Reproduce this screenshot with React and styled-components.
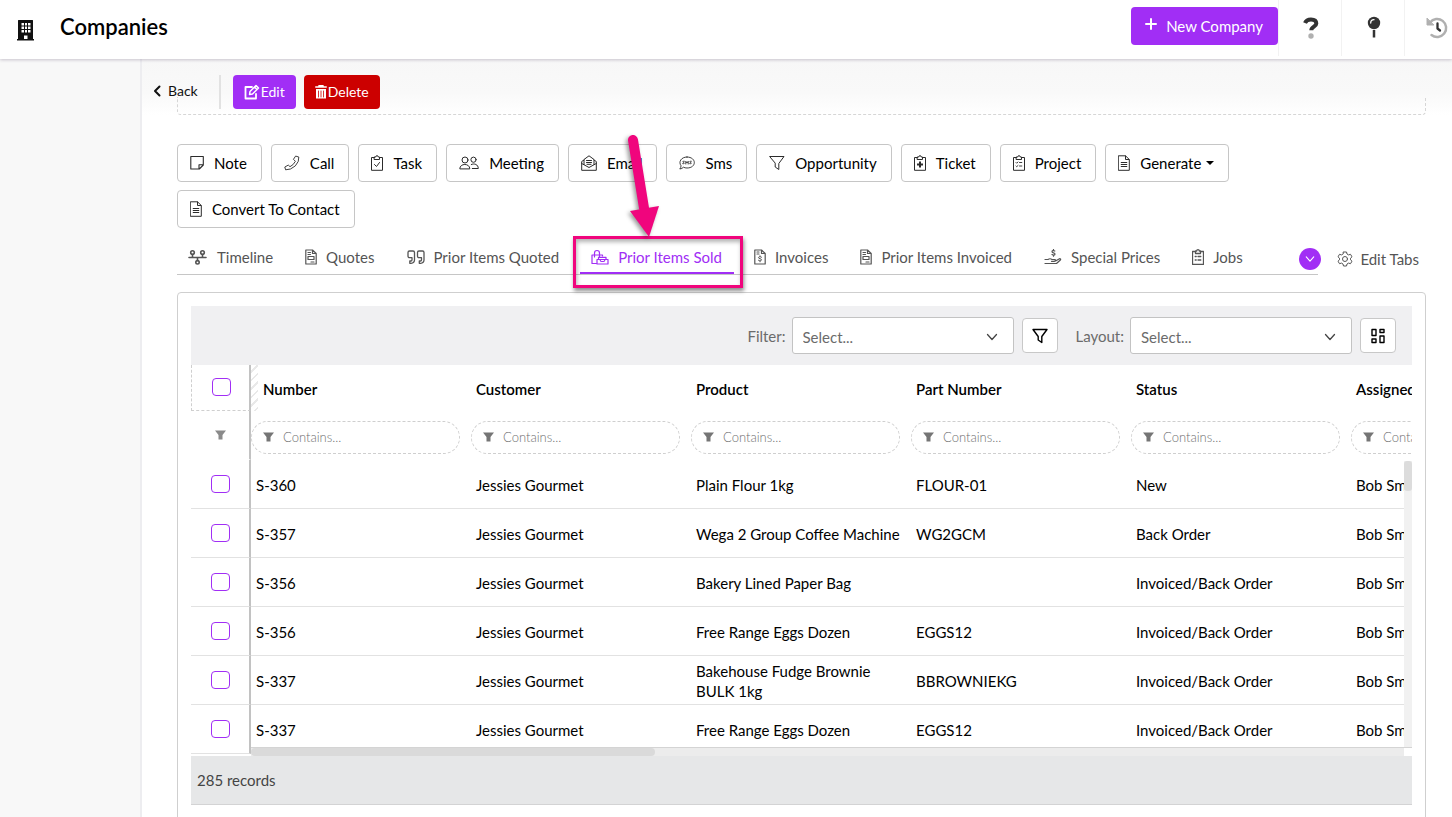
// React
import React from 'react';

// Styled Components
import styled, { createGlobalStyle, css } from 'styled-components';

const GlobalStyle = createGlobalStyle`
  *, *::before, *::after {
    box-sizing: border-box;
  }
  body {
    margin: 0;
    background: #fff;
    color: #000;
    font-family: Lato, "Liberation Sans", sans-serif;
    font-size: 15px;
    line-height: 20px;
  }
  button, input, select {
    font: inherit;
    color: inherit;
  }
`;

const purple = '#a12ef5';
const pink = '#f0057d';

const Shell = styled.div`
  display: flex;
  flex-direction: column;
  height: 100vh;
  overflow: hidden;
`;

// Top bar
const TopBar = styled.header`
  display: flex;
  align-items: center;
  height: 59px;
  flex: none;
  padding-left: 16px;
  background: #fff;
  box-shadow: 0 1px 3px rgba(60, 40, 80, 0.25);
  z-index: 2;
`;

const Title = styled.h1`
  flex: 1;
  margin: 0 0 5px 24px;
  font-size: 22px;
  line-height: 28px;
  font-weight: 600;
`;

const NewButton = styled.button`
  display: flex;
  align-items: center;
  gap: 9px;
  height: 38px;
  margin-bottom: 7px;
  padding: 0 15px 0 14px;
  border: 0;
  border-radius: 4px;
  background: ${purple};
  color: #fff;
`;

const TopIcon = styled.button`
  display: flex;
  align-items: center;
  justify-content: ${p => (p.$last ? 'flex-start' : 'center')};
  width: ${p => (p.$last ? '48px' : '63px')};
  height: 56px;
  margin-bottom: 3px;
  padding: 0 0 0 ${p => (p.$last ? '21px' : '2px')};
  border: 0;
  border-left: 1px solid #f2f2f2;
  background: none;
`;

// Page body
const Body = styled.div`
  display: grid;
  grid-template-columns: 140px 1fr;
  flex: 1;
  min-height: 0;
`;

const Sidebar = styled.aside`
  background: #f8f8f8;
`;

const Main = styled.main`
  min-width: 0;
  border-left: 2px solid #ededf0;
`;

const RecordBar = styled.div`
  display: flex;
  align-items: center;
  height: 56px;
  padding: 10px 0 0 11px;
  background: linear-gradient(#f7f7f7, #f9f9f9 60%, #fff);
`;

const BackLink = styled.a`
  display: flex;
  align-items: center;
  gap: 7px;
  padding-bottom: 2px;
  font-size: 14px;
  color: #111;
  text-decoration: none;
`;

const Divider = styled.div`
  width: 2px;
  height: 34px;
  margin: 0 12px 0 21px;
  background: #e2e2e2;
`;

const RecordButton = styled.button`
  display: flex;
  align-items: center;
  gap: 1px;
  height: 34px;
  margin-right: 8px;
  padding: 0 11px 1px;
  border: 0;
  border-radius: 4px;
  background: ${p => (p.$danger ? '#cc0000' : purple)};
  color: #fff;
  font-size: 14px;
`;

// Bottom edge of the summary panel that is scrolled under the record bar
const SummaryEdge = styled.div`
  height: 18px;
  margin: -18px 26px 0 35px;
  border: 1px dashed #d6d6d6;
  border-top: 0;
  border-radius: 0 0 4px 4px;
`;

const Content = styled.div`
  padding: 29px 26px 0 35px;
`;

const Actions = styled.div`
  display: flex;
  flex-wrap: wrap;
  gap: 8px 9px;
  max-width: 1130px;
`;

const ActionButton = styled.button`
  display: flex;
  align-items: center;
  gap: 10px;
  height: 38px;
  padding: 0 14px 0 12px;
  border: 1px solid #c6c6c6;
  border-radius: 4px;
  background: #fff;

  & > svg {
    color: #2b2b2b;
  }
`;

const Caret = styled.span`
  margin-left: -5px;
  border: 4px solid transparent;
  border-top-color: #000;
  border-bottom: 0;
`;

// Tabs
const TabBar = styled.div`
  display: flex;
  align-items: center;
  margin-top: 7px;
`;

const Tabs = styled.nav`
  display: flex;
  flex: 1;
  gap: 9px;
  height: 40px;
  border-bottom: 1px solid #c6c6c6;
`;

const Tab = styled.a`
  position: relative;
  display: flex;
  align-items: center;
  gap: 9px;
  height: 39px;
  padding: 6px 12px 0 11px;
  border-bottom: 2px solid ${p => (p.$active ? purple : 'transparent')};
  color: ${p => (p.$active ? purple : '#555')};
  text-decoration: none;
  white-space: nowrap;
`;

const Highlight = styled.span`
  position: absolute;
  inset: 1px -9px -16px -7px;
  border: 3px solid ${pink};
  box-shadow: 1px 3px 4px rgba(0, 0, 0, 0.45), inset 1px 3px 4px rgba(0, 0, 0, 0.3);
`;

const Arrow = styled.svg`
  position: absolute;
  left: 40px;
  bottom: 33px;
  filter: drop-shadow(-2px 2px 2px rgba(0, 0, 0, 0.4));
`;

const MoreTabs = styled.button`
  display: grid;
  place-items: center;
  width: 22px;
  height: 22px;
  margin: 8px 16px 0 -19px;
  padding: 0;
  border: 0;
  border-radius: 50%;
  background: ${purple};
  color: #fff;
`;

const EditTabs = styled.button`
  display: flex;
  align-items: center;
  gap: 7px;
  margin: 8px 7px 0 0;
  padding: 0;
  border: 0;
  background: none;
  color: #555;
`;

// Data grid
const Card = styled.section`
  height: 600px;
  margin-top: 17px;
  padding: 13px;
  border: 1px solid #cfcfcf;
  border-radius: 4px;
`;

const GridToolbar = styled.div`
  display: flex;
  align-items: center;
  justify-content: flex-end;
  height: 59px;
  padding-right: 16px;
  background: #f0f0f2;
  color: #6b6b6b;
`;

const SelectBox = styled.span`
  display: grid;
  align-items: center;
  width: 222px;
  margin: 0 8px 0 6px;

  & > * {
    grid-area: 1 / 1;
  }
  & > svg {
    justify-self: end;
    margin: 3px 16px 0 0;
    color: #444;
    pointer-events: none;
  }
`;

const Select = styled.select`
  appearance: none;
  width: 100%;
  height: 37px;
  padding: 3px 10px 0;
  border: 1px solid #c3c3c3;
  border-radius: 3px;
  background: #fff;
`;

const SquareButton = styled.button`
  display: grid;
  place-items: center;
  width: 36px;
  height: 35px;
  margin-right: ${p => (p.$last ? '0' : '18px')};
  padding: 0;
  border: 1px solid #c8c8c8;
  border-radius: 4px;
  background: #fff;
  color: #000;
`;

const Viewport = styled.div`
  position: relative;
  height: 391px;
  overflow: hidden;
`;

const Table = styled.table`
  width: 1380px;
  table-layout: fixed;
  border-collapse: separate;
  border-spacing: 0;
`;

const cell = css`
  padding: 0 5px;
  text-align: left;
  vertical-align: middle;
`;

const HeadCell = styled.th`
  ${cell}
  width: 220px;
  height: 46px;
  padding-top: 2px;
  padding-left: ${p => (p.$first ? '12px' : '5px')};
  font-weight: 600;
  background: ${p => (p.$first
    ? 'repeating-linear-gradient(135deg, #fff 0 4px, #e9e9e9 4px 6px) left / 7px 100% no-repeat'
    : 'none')};
`;

const PinnedCell = styled.td`
  width: 60px;
  padding: 0 0 0 1px;
  border-right: 2px solid #c2c2c2;
  border-bottom: 1px solid ${p => (p.$filter ? 'transparent' : '#e2e2e2')};
  text-align: center;
  vertical-align: middle;
  line-height: 0;
  color: #8a8a8a;
`;

const PinnedHead = styled(PinnedCell)`
  padding-bottom: 2px;
  border-left: 1px dashed #cfcfcf;
  border-bottom: 1px dashed #cfcfcf;
`;

const FilterCell = styled.td`
  height: 49px;
  padding: 3px 11px 0 0;
`;

const FilterPill = styled.label`
  display: flex;
  align-items: center;
  gap: 9px;
  height: 33px;
  padding: 0 11px;
  border: 1px dashed #cfcfcf;
  border-radius: 17px;
  color: #757575;

  & input {
    flex: 1;
    min-width: 0;
    padding: 0;
    border: 0;
    outline: 0;
    background: none;
    font-size: 13px;
    font-weight: 300;
  }
  & input::placeholder {
    color: #707070;
  }
`;

const Cell = styled.td`
  ${cell}
  height: 49px;
  padding-top: 2px;
  border-bottom: 1px solid #e2e2e2;
`;

const Check = styled.input`
  appearance: none;
  width: 19px;
  height: 18px;
  margin: 0;
  border: 1px solid ${purple};
  border-radius: 4px;
  background: #fff;
`;

const VScroll = styled.div`
  position: absolute;
  top: 96px;
  right: 0;
  bottom: 9px;
  width: 8px;
  background: #f1f1f1;

  &::before {
    content: '';
    display: block;
    height: 30px;
    border-radius: 3px;
    background: #dcdcdc;
  }
`;

const HScroll = styled.div`
  position: absolute;
  left: 60px;
  right: 0;
  bottom: 0;
  height: 9px;
  padding-right: 8px;
  border-top: 1px solid #d4d4d4;
  background: linear-gradient(#ececec, #ececec) left / calc(100% - 8px) 100% no-repeat #fff;

  &::before {
    content: '';
    display: block;
    width: 35%;
    height: 8px;
    border-radius: 4px;
    background: #dadada;
  }
`;

const Footer = styled.footer`
  height: 49px;
  padding: 14px 6px;
  border-bottom: 1px solid #d3d3d4;
  background: #e6e7e8;
  color: #444;
`;

// Icons
const Icon = ({ w = 16, h = 16, sw = 1, children, ...rest }) => (
  <svg width={w} height={h} viewBox={`0 0 ${w} ${h}`} fill="none" stroke="currentColor"
    strokeWidth={sw} strokeLinecap="round" strokeLinejoin="round" aria-hidden="true" {...rest}>
    {children}
  </svg>
);

const BuildingIcon = () => (
  <Icon w={20} h={22} stroke="none" fill="#111">
    <path fillRule="evenodd" d="M2 1.5Q2 1 2.5 1h14q.5 0 .5.5V20h1v1.500H1V20h1ZM5.500 4v2.500H8V4Zm3.500 0v2.500h2V4Zm3 0v2.500h2.500V4ZM5.500 7.500V10H8V7.500ZM9 7.500V10h2V7.500Zm3 0V10h2.500V7.500ZM5.500 11v2.500H8V11ZM9 11v2.500h2V11Zm3 0v2.500h2.500V11ZM8 16.500V20h3.500v-3.500Z" />
  </Icon>
);

const QuestionIcon = () => (
  <Icon w={18} h={24}>
    <path d="M3 7C4 4.500 6.300 3.500 9 3.500c3.500 0 5.300 1.700 5.300 4 0 3.300-5 3-5 6.800" stroke="#333" strokeWidth="4" strokeLinecap="butt" />
    <circle cx="9" cy="20" r="2.700" fill="#b0b0b0" stroke="none" />
  </Icon>
);

const PinIcon = () => (
  <Icon w={16} h={24}>
    <path d="M8 14v7.500" stroke="#333" strokeWidth="2.500" strokeLinecap="butt" />
    <circle cx="8" cy="7" r="6.200" fill="#333" stroke="none" />
    <path d="M4.700 7A3.300 3.300 0 0 1 8 3.700" stroke="#fff" strokeWidth="1.300" />
  </Icon>
);

const HistoryIcon = () => (
  <Icon w={22} h={24}>
    <path d="M4 6.500A9 9 0 1 1 5.500 19" stroke="#b0b0b0" strokeWidth="2.500" />
    <path d="M1 2.500v6.500h6.500z" fill="#b0b0b0" stroke="#b0b0b0" />
    <path d="M11.500 7.500v5l2.500 2" stroke="#333" strokeWidth="2.300" />
  </Icon>
);

const NoteIcon = () => (
  <Icon w={14} sw={1.1}><path d="M.8 1.500h12.500v8.500l-4 4H.8zM13.300 9.800H9v4.200" /></Icon>
);

const CallIcon = () => (
  <Icon sw={0.9}>
    <path d="M12 1.200 14.800 2q.6 4.500-3.500 8.900Q6.500 15.200 1.600 14.800L.8 12l3.500-1.900 1.700 1.600q3.500-1.700 5.400-5.400L9.700 4.600Z" />
  </Icon>
);

const Clipboard = ({ sw = 1, children }) => (
  <Icon w={12} sw={sw}>
    <path d="M3.500 2.500h-3v12.800h11V2.500h-3M3.500 4.500h5V2H7.300a1.300 1.300 0 0 0-2.600 0H3.500z" />
    {children}
  </Icon>
);

const TaskIcon = () => <Clipboard><path d="m3.500 9.500 2 2 3-4" /></Clipboard>;
const TicketIcon = () => <Clipboard><path d="M6 6.500v6M3 9.500h6" strokeWidth="2" strokeLinecap="butt" /></Clipboard>;
const ProjectIcon = () => <Clipboard><path d="m3 7.500.7.700L5 7M6.500 7.500h2.300M3 11l.7.700L5 10.500M6.500 11h2.300" strokeWidth=".9" /></Clipboard>;

const MeetingIcon = () => (
  <Icon w={20} sw={1}>
    <circle cx="6" cy="5" r="3" />
    <path d="M.8 13.500c0-5.500 10-5.500 10 0z" />
    <circle cx="14.500" cy="4.700" r="2.600" />
    <path d="M12.300 9.500c3-1.500 7 0 7 4h-6" />
  </Icon>
);

const EmailIcon = () => (
  <Icon>
    <path d="M3 5 .7 6.500v8.800h14.600V6.500L13 5M.7 8.500 8 12.500l7.300-4M3 9.500V4.500L8 .8l5 3.700v5M5.500 5.500h5M5.500 7.500h5M6 9.300h4" />
  </Icon>
);

const SmsIcon = () => (
  <Icon sw={0.9}>
    <path d="M8 2c9.800 0 9.800 11 0 11q-2 0-3.500-.8Q3 13.800 .8 14q1.300-1.500 1.200-3.300C-.7 7 2 2 8 2Z" />
    <path d="M5.300 6.200q-1.500-.4-1.500.6c0 .8 1.500.4 1.500 1.400q0 .9-1.600.5M6.800 9V6.300L8 8l1.200-1.700V9M12.300 6.200q-1.500-.4-1.500.6c0 .8 1.500.4 1.500 1.400q0 .9-1.600.5" />
  </Icon>
);

const FunnelIcon = ({ sw = 1 }) => (
  <Icon sw={sw}><path d="M1 1.500h14L9.800 8.500v6L6.200 12V8.500z" /></Icon>
);

const DocIcon = () => (
  <Icon w={12} sw={1}><path d="M.7.8h6.800l3.800 3.700v10.800H.7zM7.500 1v3.500H11M3.200 7.500h5.600M3.200 9.500h5.600M3.200 11.500h5.600" /></Icon>
);

const TimelineIcon = () => (
  <Icon w={20} sw={1.600}>
    <path d="M1 8.500h17M4.500 8V5.500M14.500 8V5.500M9.500 9v2.500" />
    <circle cx="4.500" cy="3.500" r="1.800" /><circle cx="14.500" cy="3.500" r="1.800" /><circle cx="9.500" cy="13.300" r="1.700" />
  </Icon>
);

const QuoteDocIcon = () => (
  <Icon w={12} sw={1.2}>
    <path d="M.8 1h6.700L11.200 4.500V15H.8zM7.500 1v3.500H11M3 3.500h2.500M3 5.500h2.500M3 7.500h6v3H3zM6 13h3" />
  </Icon>
);

const InvoiceIcon = () => (
  <Icon w={12} sw={1.2}>
    <path d="M.8 1h6.700L11.200 4.500V15H.8zM7.500 1v3.500H11M3 3h2M3 5h2" />
    <path d="M7.500 8.200C6 7.400 4.500 7.700 4.500 8.700c0 1.300 3 .7 3 2.100 0 1-1.500 1.300-3 .5M6 6.800v.8M6 12v.8" strokeWidth="1" />
  </Icon>
);

// a pair of hollow closing quote marks
const QuotesIcon = () => (
  <Icon w={18} sw={1.300}>
    <path d="M5 8.700H2.500a1.500 1.500 0 0 1-1.500-1.500V3.500A1.500 1.500 0 0 1 2.500 2H6a1.500 1.500 0 0 1 1.500 1.500V11q0 3-3.500 3.300H2.800V12H4q1 0 1-1.300z" />
    <path d="M14.500 8.700H12a1.500 1.500 0 0 1-1.500-1.500V3.500A1.500 1.500 0 0 1 12 2h3.500A1.500 1.500 0 0 1 17 3.500V11q0 3-3.500 3.300h-1.200V12h1.200q1 0 1-1.300z" />
  </Icon>
);

const SoldIcon = () => (
  <Icon w={18} sw={1.200}>
    <path d="M5.500 14.500H1V6h10.500v1M3.500 8V4a2.500 2.500 0 0 1 5 0v4" />
    <path d="M7.500 10V8.300h7.500V10M6 10.500h11V15H6zM9 10.500q.3 2 1.500 2h2q1.200 0 1.500-2" />
  </Icon>
);

const HandIcon = () => (
  <Icon w={18} sw={1.200}>
    <path d="M1 10.500h3q2-1.500 4 0h3q1 1-.500 1.800H7.500M11.500 12l4-2.300q1.800 0 .9 1.300L12.500 14.500H1" />
    <path d="M10.800 2C9.500 1.300 8 1.500 8 2.700c0 1.400 3 .8 3 2.300 0 1.300-1.800 1.300-3 .6M9.500.5v.8M9.500 6.300v.9" />
  </Icon>
);

const JobsIcon = () => <Clipboard sw={1.300}><path d="M3.200 7.500h1M6 7.500h2.800M3.200 11h1M6 11h2.800" /></Clipboard>;

const GearIcon = () => (
  <Icon sw={1}>
    <circle cx="8" cy="8" r="2.500" />
    <path d="M6.500 1h3l.5 2 1.500.9 2-.6 1.500 2.500L13.500 7.200v1.600L15 10.200l-1.500 2.500-2-.6L10 13l-.5 2h-3L6 13l-1.500-.9-2 .6L1 10.200l1.500-1.400V7.200L1 5.800l1.500-2.500 2 .6L6 3z" />
  </Icon>
);

const EditIcon = () => (
  <Icon sw={1.800}>
    <path d="M8 3H1.500v11.500H12V10" />
    <path d="m5.500 10.500.5-3 6-6 2.500 2.500-6 6zM10.500 3 13 5.500" strokeWidth="1.500" />
  </Icon>
);

const TrashIcon = () => (
  <Icon w={12} h={14}>
    <path d="M.8 2h10.400M4 1.500V.8h4v.7" strokeWidth="1.600" />
    <path d="M1 4h10v9.500H1z" fill="currentColor" stroke="none" />
    <path d="M3.500 6v6M6 6v6M8.500 6v6" stroke="#cc0000" strokeWidth=".8" />
  </Icon>
);

const LayoutIcon = () => (
  <Icon sw={1.400}><path d="M2 1.500h4v6H2zM10 1.500h4v3h-4zM2 11h4v3.500H2zM10 8h4v6.500h-4z" /></Icon>
);

const ChevronIcon = ({ w = 12 }) => (
  <Icon w={w} h={8} viewBox="0 0 12 8" sw={1.300}><path d="m1.500 1.500 4.500 5 4.500-5" /></Icon>
);

const SmallFilter = () => (
  <Icon w={11} h={10} stroke="none" fill="currentColor"><path d="M0 .5h11L7.500 5v4.500h-4V5z" /></Icon>
);

// Data
const actions = [
  ['Note', NoteIcon],
  ['Call', CallIcon],
  ['Task', TaskIcon],
  ['Meeting', MeetingIcon],
  ['Email', EmailIcon],
  ['Sms', SmsIcon],
  ['Opportunity', FunnelIcon],
  ['Ticket', TicketIcon],
  ['Project', ProjectIcon],
  ['Generate', DocIcon],
  ['Convert To Contact', DocIcon],
];

const tabs = [
  ['Timeline', TimelineIcon],
  ['Quotes', QuoteDocIcon],
  ['Prior Items Quoted', QuotesIcon],
  ['Prior Items Sold', SoldIcon],
  ['Invoices', InvoiceIcon],
  ['Prior Items Invoiced', QuoteDocIcon],
  ['Special Prices', HandIcon],
  ['Jobs', JobsIcon],
];

const columns = ['Number', 'Customer', 'Product', 'Part Number', 'Status', 'Assigned To'];

const rows = [
  ['S-360', 'Plain Flour 1kg', 'FLOUR-01', 'New'],
  ['S-357', 'Wega 2 Group Coffee Machine', 'WG2GCM', 'Back Order'],
  ['S-356', 'Bakery Lined Paper Bag', '', 'Invoiced/Back Order'],
  ['S-356', 'Free Range Eggs Dozen', 'EGGS12', 'Invoiced/Back Order'],
  ['S-337', 'Bakehouse Fudge Brownie BULK 1kg', 'BBROWNIEKG', 'Invoiced/Back Order'],
  ['S-337', 'Free Range Eggs Dozen', 'EGGS12', 'Invoiced/Back Order'],
];

const Picker = ({ id, label }) => (
  <>
    <label htmlFor={id}>{label}</label>
    <SelectBox>
      <Select id={id}>
        <option>Select...</option>
      </Select>
      <ChevronIcon />
    </SelectBox>
  </>
);

const ItemsTable = () => (
  <Viewport>
    <Table>
      <thead>
        <tr>
          <PinnedHead><Check type="checkbox" aria-label="Select all" /></PinnedHead>
          {columns.map((name, i) => <HeadCell key={name} $first={i === 0} scope="col">{name}</HeadCell>)}
        </tr>
        <tr>
          <PinnedCell $filter><SmallFilter /></PinnedCell>
          {columns.map(name => (
            <FilterCell key={name}>
              <FilterPill>
                <SmallFilter />
                <input type="text" placeholder="Contains..." aria-label={name} />
              </FilterPill>
            </FilterCell>
          ))}
        </tr>
      </thead>
      <tbody>
        {rows.map(([number, product, part, status], i) => (
          <tr key={i}>
            <PinnedCell><Check type="checkbox" aria-label={`Select row ${i + 1}`} /></PinnedCell>
            <Cell>{number}</Cell>
            <Cell>Jessies Gourmet</Cell>
            <Cell>{product}</Cell>
            <Cell>{part}</Cell>
            <Cell>{status}</Cell>
            <Cell>Bob Smith</Cell>
          </tr>
        ))}
      </tbody>
    </Table>
    <VScroll />
    <HScroll />
  </Viewport>
);

const App = () => (
  <Shell>
    <GlobalStyle />
    <TopBar>
      <BuildingIcon />
      <Title>Companies</Title>
      <NewButton type="button">
        <Icon w={12} h={16} sw={2}><path d="M6 1v10M1 6h10" /></Icon>
        New Company
      </NewButton>
      <TopIcon type="button" aria-label="Help"><QuestionIcon /></TopIcon>
      <TopIcon type="button" aria-label="Pin"><PinIcon /></TopIcon>
      <TopIcon type="button" aria-label="History" $last><HistoryIcon /></TopIcon>
    </TopBar>
    <Body>
      <Sidebar />
      <Main>
        <RecordBar>
          <BackLink href="#">
            <Icon w={8} h={12} sw={2}><path d="M6.500 1.500 2 6l4.500 4.500" /></Icon>
            Back
          </BackLink>
          <Divider />
          <RecordButton type="button"><EditIcon />Edit</RecordButton>
          <RecordButton type="button" $danger><TrashIcon />Delete</RecordButton>
        </RecordBar>
        <SummaryEdge />
        <Content>
          <Actions>
            {actions.map(([name, Glyph]) => (
              <ActionButton key={name} type="button">
                <Glyph />
                {name}
                {name === 'Generate' && <Caret />}
              </ActionButton>
            ))}
          </Actions>
          <TabBar>
            <Tabs>
              {tabs.map(([name, Glyph]) => {
                const active = name === 'Prior Items Sold';
                return (
                  <Tab key={name} href="#" $active={active}>
                    <Glyph />
                    {name}
                    {active && (
                      <>
                        <Highlight />
                        <Arrow width="50" height="110" viewBox="0 0 50 110" aria-hidden="true">
                          <path d="M13 11 24 79" stroke={pink} strokeWidth="10" strokeLinecap="round" />
                          <path d="M10 82 39 77 29 108Z" fill={pink} />
                        </Arrow>
                      </>
                    )}
                  </Tab>
                );
              })}
            </Tabs>
            <MoreTabs type="button" aria-label="More tabs"><ChevronIcon w={10} /></MoreTabs>
            <EditTabs type="button"><GearIcon />Edit Tabs</EditTabs>
          </TabBar>
          <Card>
            <GridToolbar>
              <Picker id="filter" label="Filter:" />
              <SquareButton type="button" aria-label="Edit filter"><FunnelIcon sw={1.400} /></SquareButton>
              <Picker id="layout" label="Layout:" />
              <SquareButton type="button" aria-label="Edit layout" $last><LayoutIcon /></SquareButton>
            </GridToolbar>
            <ItemsTable />
            <Footer>285 records</Footer>
          </Card>
        </Content>
      </Main>
    </Body>
  </Shell>
);

export default App;
